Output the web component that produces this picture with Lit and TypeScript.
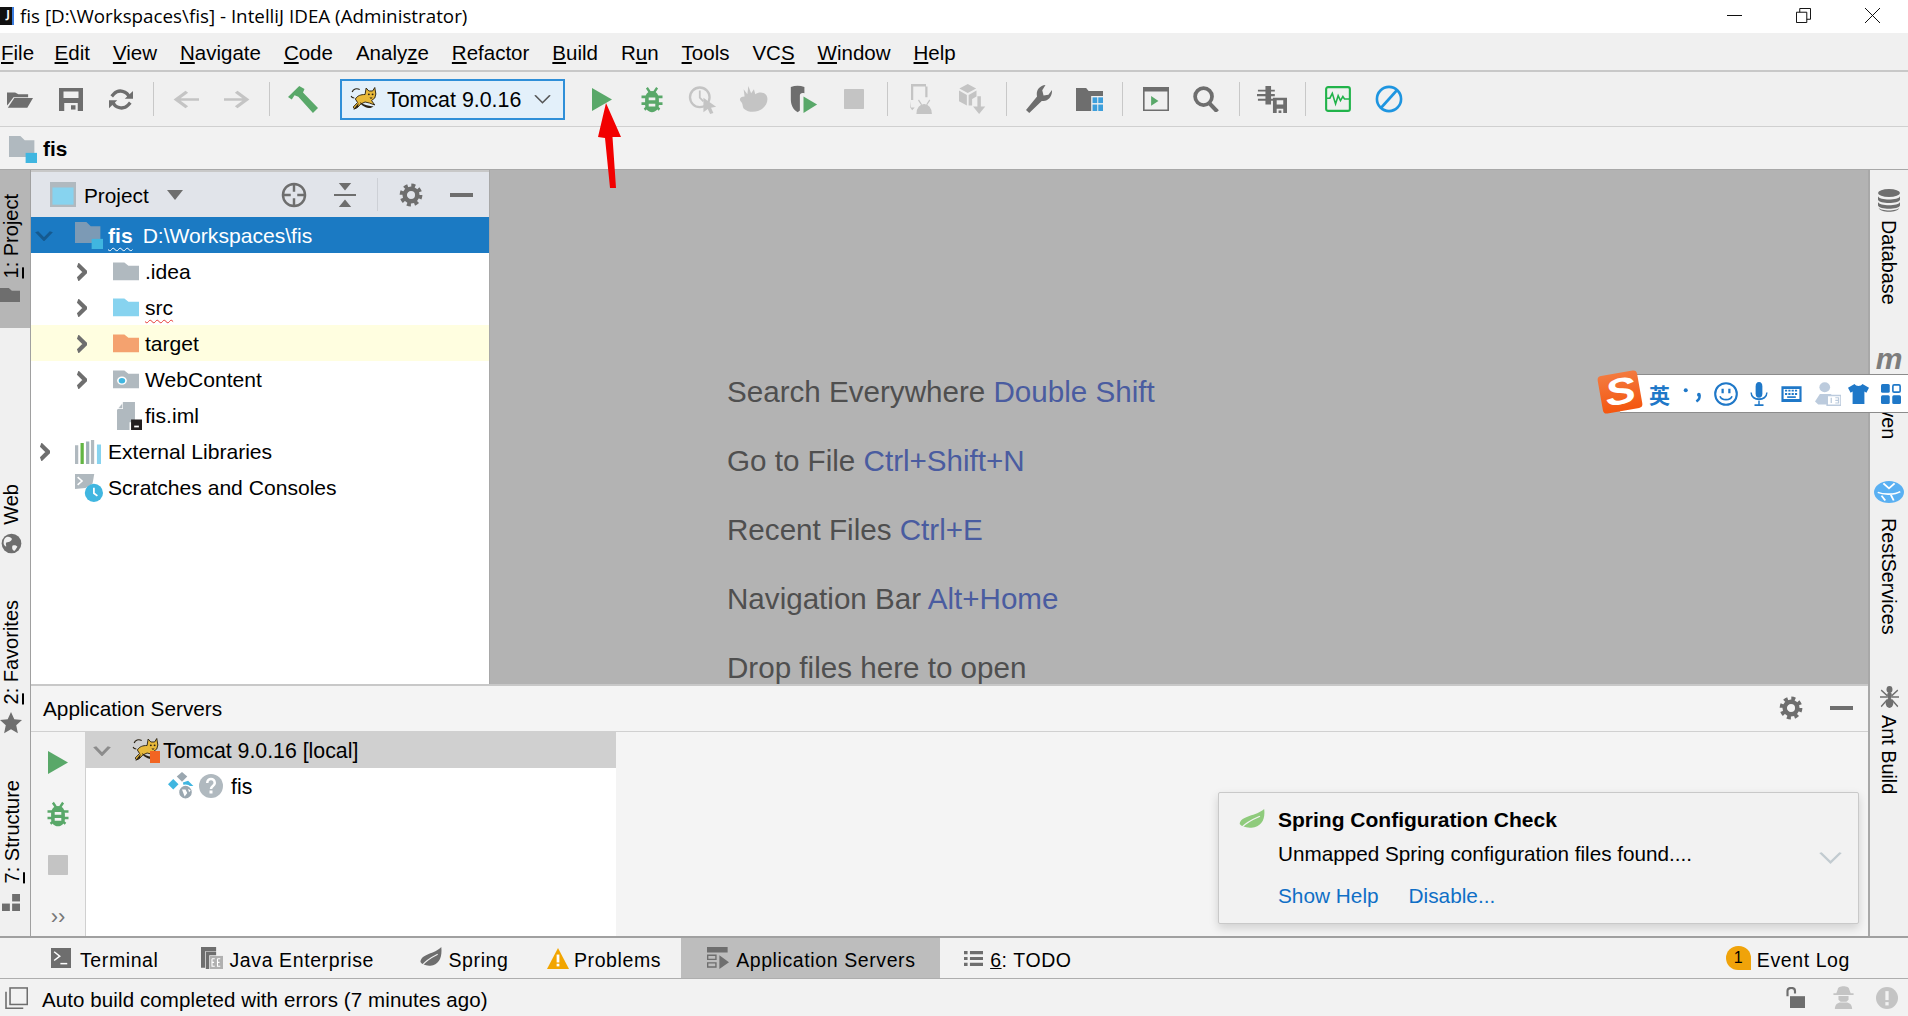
import { LitElement, html, css, svg, nothing } from "lit";
import { customElement } from "lit/decorators.js";

const G = "#6e6e6e";
const D = "#c4c4c4";
const GR = "#59a869";

const ic = (w: number, h: number, body: unknown, vb = "0 0 16 16") =>
  html`<svg class="ic" width=${w} height=${h} viewBox=${vb} preserveAspectRatio="none">${body}</svg>`;

const gearBody = (c: string) => svg`<circle cx="8" cy="8" r="4.2" fill="none" stroke=${c} stroke-width="3"/><circle cx="8" cy="8" r="6.3" fill="none" stroke=${c} stroke-width="2.6" stroke-dasharray="2.6 2.35"/>`;
const gear = (s = 25) => ic(s, s, gearBody(G));
const minus = (w = 23) => ic(w, 4, svg`<rect width="16" height="16" fill=${G}/>`);
const playIc = (w = 20, h = 23) => ic(w, h, svg`<path d="M0 0 16 8 0 16z" fill=${GR}/>`);
const bugBody = (c: string) => svg`
  <path d="M4.6 1 6.8 4M11.4 1 9.2 4M1 6.5h3M12 6.5h3M1 10.5h3M12 10.5h3M3 14l2-1.6M13 14l-2-1.6" stroke=${c} stroke-width="1.6" fill="none"/>
  <path fill-rule="evenodd" d="M8 3c3 0 4.6 2.2 4.6 5v3c0 2.5-2 4.5-4.6 4.5S3.400 13.500 3.400 11V8C3.400 5.200 5 3 8 3zM5.800 6.800v1.700h4.400V6.800zM5.800 10.500v1.700h4.400v-1.700z" fill=${c}/>`;
const bug = (w = 24, h = 27) => ic(w, h, bugBody(GR));
const stop = (w = 20, h = 20, c = D) => ic(w, h, svg`<rect width="16" height="16" rx=".6" fill=${c}/>`);

const tomcatBody = svg`
  <path d="M2 5C3 2 6 1 9 2.500" fill="none" stroke="#2a2214" stroke-width="1.100"/>
  <path d="M1 9c.5 1.500 1.500 2 3 2" fill="none" stroke="#2a2214" stroke-width="1"/>
  <path d="M5 12c2-3.500 5-4.500 9-4.500L15 1l2.500 3h3.500L23 .5 24 7l-1 4-3 2.500 3 4.500-5-2-4-1-4 2-3 3.500-2.800 1.500L3 20l4-4.500z" fill="#e8b93a" stroke="#2a2214" stroke-width=".9" stroke-linejoin="round"/>
  <path d="M9 15c4 3 9 4 13 4.500L19 21c-4 0-8-2-10-6zM5 20l3-4-.5 4-4.500 3z" fill="#2a2214"/>
  <circle cx="17.500" cy="7.300" r=".9" fill="#2a2214"/><circle cx="21" cy="7.300" r=".9" fill="#2a2214"/><path d="M18 10.500h3l-1.500 1.500z" fill="#2a2214"/>`;
const tomcat = (w = 28, h = 24) => ic(w, h, tomcatBody, "0 0 26 24");

const folderPath = "M0 1h7l2.500 2.500H16V14H0z";
const folder = (c: string, w = 26, h = 22) => ic(w, h, svg`<path d=${folderPath} fill=${c}/>`);
const moduleFolder = (c: string, w = 28, h = 27) => ic(w, h, svg`
  <path d="M0 0h6.500l2.500 2.500h5.500V12.500H0z" fill=${c}/><rect x="9.500" y="10" width="6.500" height="6" fill="#40b6e0"/>`);
const webFolder = () => ic(26, 22, svg`<path d=${folderPath} fill="#b0b9bf"/><circle cx="5.500" cy="8.500" r="3" fill="#fff"/><circle cx="5.500" cy="8.500" r="2" fill="#40b6e0"/>`);
const imlIcon = () => ic(25, 28, svg`
  <path d="M4 0H11.500V11.500H8V16H0V4.500z" fill="#b0b9bf" fill-rule="evenodd"/><path d="M3.800 .3 .3 4h3.500z" fill="#fff"/><path d="M3.400 1 1 3.500h2.400z" fill="#b0b9bf"/>
  <rect x="9" y="10" width="7" height="6" fill="#231f20"/><rect x="11" y="13.500" width="3" height="1" fill="#fff"/>`);
const libIcon = () => ic(26, 24, svg`
  <rect x="0" y="3.500" width="2" height="12.500" fill="#b0b9bf"/><rect x="3.400" y="2" width="2" height="14" fill="#62b543"/>
  <rect x="6.800" y="1" width="2" height="15" fill="#9fb0b8"/><rect x="9.800" y="0" width="2" height="16" fill="#b0b9bf"/><rect x="13.500" y="3" width="2.500" height="13" fill="#87d3ef"/>`);
const scratchIcon = () => ic(28, 28, svg`
  <path d="M0 0h11l-1 5.500-4 2.500L0 8.500z" fill="#b0b9bf"/><path d="M1.500 1.800 4 4 1.500 6.200" fill="none" stroke="#fff" stroke-width=".9"/>
  <circle cx="10.800" cy="10.800" r="5.200" fill="#40b6e0"/><path d="M10.800 7.800V11l2 1.500" stroke="#fff" stroke-width="1" fill="none"/>`);
const chev = (open: boolean, c: string, w = open ? 18 : 11, h = open ? 11 : 18) =>
  ic(w, h, open
    ? svg`<path d="M1.500 2.500 8 13.500 14.500 2.500" fill="none" stroke=${c} stroke-width="3.200"/>`
    : svg`<path d="M2.500 1.500 13.500 8 2.500 14.500" fill="none" stroke=${c} stroke-width="4.500"/>`);

const globeBody = (bg: string) => svg`<circle cx="8" cy="8" r="7.500" fill=${G}/><path d="M3 4c2-2 4-1 5 0s-1 3-3 3-1 2-1 3-2-1-2-2 0-3 1-4zM9 9.500c1.500-.5 3 0 3.500 1l-2 3c-1 .5-2-1-2-2s0-1.800.500-2z" fill=${bg}/>`;
const leafBody = (c: string, v: string) => svg`<path d="M15.500 0c.8 7-1.500 12.500-7.500 13-3.500.3-6-1-7-2.500C1.500 4.500 11 5 15.500 0z" fill=${c}/><path d="M2 13c3-4 7-6 11-8" fill="none" stroke=${v} stroke-width=".8"/>`;

const toolbarIcons: Record<string, unknown> = {
  open: ic(26, 19, svg`<path d="M0 2h5l2 1.500h6V6H4L1 11.500 0 13z" fill=${G}/><path d="M4.500 6.800H16L12.500 15H.500z" fill=${G}/>`),
  save: ic(24, 23, svg`<path fill-rule="evenodd" d="M0 0h16v16H0zM3 2.500v4.500h10V2.500zM3.500 10.500V16h9v-5.500z" fill=${G}/><rect x="8" y="12" width="3" height="3" fill=${G}/>`),
  sync: ic(24, 23, svg`
    <path d="M13.500 6.500A6 6 0 0 0 3.200 4.200L1.800 5.800M2.500 9.500A6 6 0 0 0 12.800 11.800l1.400-1.600" fill="none" stroke=${G} stroke-width="2.300"/>
    <path d="M10.500 7.500h5.500V2zM5.500 8.500H0V14z" fill=${G}/>`),
  back: ic(26, 19, svg`<path d="M16 8H2.500M8.500 1.500 2 8l6.500 6.500" fill="none" stroke=${D} stroke-width="2.300"/>`),
  fwd: ic(26, 19, svg`<path d="M0 8h13.500M7.500 1.500 14 8l-6.500 6.500" fill="none" stroke=${D} stroke-width="2.300"/>`),
  hammer: ic(30, 27, svg`<path d="M0 6.500 6 0l2.800 1.800L8 3.800 16 13l-2.700 3L5.500 6.300 3.500 5.500 2 8z" fill=${GR}/>`),
  play: playIc(),
  bug: bug(),
  clock: ic(29, 29, svg`<circle cx="6.500" cy="6.800" r="5.400" fill="none" stroke=${D} stroke-width="1.300"/><path d="M6.500 3v4l2 2" fill="none" stroke=${D} stroke-width="1"/><path d="M8.500 7 15.500 12l-2.800.6L14 15.500l-1.800.5-1.300-2.800L8.500 15z" fill=${D}/>`),
  hand: ic(30, 26, svg`<path d="M3 2l2 3 .5-5L7 4.500 8.500 2 9.200 5C11 3.500 14 3.500 15.300 6c1.200 3-.3 7.500-4.300 9.300-3 1.200-6 .5-7.500-1C2 13 3 11 1.500 9.500.300 8 1.500 6.500 3.500 6.500z" fill=${D}/>`),
  cover: ic(29, 28, svg`<path d="M1 1.200C3.500 .2 6 .2 8.500 1.200v3.500C7 4.200 6 4.800 6 6v8.500L4.800 15.500C2 14 1 11 1 8z" fill=${G}/><path d="M8 6.500v9.500l7.500-4.800z" fill=${GR}/>`),
  stop: stop(),
  device: ic(24, 30, svg`<path d="M2 0h10v1.300H3.500v7.200H2zM11.500 1.300H13V7h-1.500zM2 9v3.500h2.500L2.800 14 1.500 12.500z" fill=${D}/><path d="M6 15.800a4.500 4.500 0 0 1 9.500 0zM7 8.500l2 2.500M14.500 8.500l-2 2.500" fill=${D} stroke=${D} stroke-width=".8"/>`),
  box: ic(28, 30, svg`<path d="M5 0 9.800 2.400 5 4.800.2 2.400zM0 3.500 4.500 5.800v5.700L0 9.200zM5.500 5.800 10 3.500v3.200L7.500 8v3.500l-2 0z" fill=${D}/><path d="M10.500 6.500h2V12h2.500L11.500 16 8 12h2.500z" fill=${D}/>`),
  wrench: ic(26, 28, svg`<path d="M2 16 0 14.300 6.800 6.500C6 3.500 8 .3 12 0L10 3l.8 3 3-.500L16 2.800c.3 3.500-2.300 7-6.300 6.300z" fill=${G}/>`),
  struct: ic(27, 23, svg`<path d="M0 0h6l1.500 2H16V5.500H9V16H0z" fill=${G}/><rect x="9.800" y="6.500" width="2.800" height="4" fill="#3d9fdc"/><rect x="13.200" y="6.500" width="2.800" height="4" fill="#3d9fdc"/><rect x="9.800" y="11.500" width="2.800" height="4.500" fill="#3d9fdc"/><rect x="13.200" y="11.500" width="2.800" height="4.500" fill="#3d9fdc"/>`),
  term: ic(26, 24, svg`<rect x=".5" y=".5" width="15" height="15" fill="none" stroke=${G} stroke-width="1"/><rect x="0" y="0" width="16" height="3" fill=${G}/><path d="M5 6v6.500l4.500-3.200z" fill=${GR}/>`),
  search: ic(26, 26, svg`<circle cx="6.500" cy="6.500" r="5.200" fill="none" stroke=${G} stroke-width="2.300"/><path d="M10 10.500 15 15.800" stroke=${G} stroke-width="2.500"/>`),
  chip: ic(30, 27, svg`<path d="M4.500 0H7.500V2.200H9.500V3.200H7.500V4.800H9.500V6H7.500V7.500H9V8.700H7.500V11H4.500V8.700H.500V7.500H4.500V6H0V4.800H4.500V3.200H.500V2.200H4.500z" fill=${G}/><path fill-rule="evenodd" d="M8.500 7H16V16H8.500zM10.500 8.500V11h3.500V8.500zM10.500 13.500V16h3.500v-2.500z" fill=${G}/><rect x="11.500" y="14.500" width="1.500" height="1.500" fill=${G}/>`),
  profiler: ic(26, 26, svg`<rect x=".7" y=".7" width="14.600" height="14.600" rx="1.200" fill="none" stroke="#21b34a" stroke-width="1.300"/><path d="M1 7.500h2l1.500-3 2 6.500 1.600-5 1.400 3 1.500-2.500 1 1.500H15" fill="none" stroke="#21b34a" stroke-width="1"/>`),
  no: ic(28, 28, svg`<circle cx="8" cy="8" r="6.900" fill="none" stroke="#1e95e0" stroke-width="1.500"/><path d="M3.500 13 12.500 3" stroke="#1e95e0" stroke-width="1.500"/>`),
};

const tree = [
  { lvl: 0, open: true, label: "fis", extra: "D:\\Workspaces\\fis", sel: true, icon: () => moduleFolder("#7c9ab5") },
  { lvl: 1, label: ".idea", icon: () => folder("#b0b9bf") },
  { lvl: 1, label: "src", red: true, icon: () => folder("#87d3ef") },
  { lvl: 1, label: "target", hl: true, icon: () => folder("#f4a26f") },
  { lvl: 1, label: "WebContent", icon: webFolder },
  { lvl: 1, label: "fis.iml", noChev: true, pad: true, icon: imlIcon },
  { lvl: 0, label: "External Libraries", icon: libIcon },
  { lvl: 0, label: "Scratches and Consoles", noChev: true, icon: scratchIcon },
];

const hints = [
  ["Search Everywhere", "Double Shift"],
  ["Go to File", "Ctrl+Shift+N"],
  ["Recent Files", "Ctrl+E"],
  ["Navigation Bar", "Alt+Home"],
  ["Drop files here to open", ""],
];

const menus = [
  ["", "F", "ile"], ["", "E", "dit"], ["", "V", "iew"], ["", "N", "avigate"], ["", "C", "ode"],
  ["Analy", "z", "e"], ["", "R", "efactor"], ["", "B", "uild"], ["R", "u", "n"], ["", "T", "ools"],
  ["VC", "S", ""], ["", "W", "indow"], ["", "H", "elp"],
];

@customElement("app-root")
export class AppRoot extends LitElement {
  static styles = css`
    :host { display: block; width: 1908px; height: 1016px; font-family: "Liberation Sans", Arial, sans-serif; font-size: 20.8px; color: #000; }
    * { box-sizing: border-box; }
    .ic { display: block; flex: none; }
    .app { position: relative; width: 1908px; height: 1016px; overflow: hidden; display: flex; flex-direction: column; background: #f2f2f2; }
    .title { height: 33px; background: #fff; display: flex; align-items: center; flex: none; font-family: "Open Sans", "Liberation Sans", sans-serif; font-size: 18.8px; padding-bottom: 2px; }
    .jlogo { width: 14px; height: 18px; background: #111; color: #fff; font-size: 11px; font-weight: 700; line-height: 14px; text-align: right; padding-right: 2px; border-right: 2px solid #3b7de0; margin-right: 6px; }
    .title .spacer { flex: 1; }
    .wbtns { display: flex; align-items: center; padding-right: 28px; gap: 54px; }
    .menu { height: 39px; flex: none; background: #f0f0f0; border-bottom: 2px solid #c8c8c8; display: flex; align-items: center; gap: 23px; padding: 3px 0 0 1px; font-size: 20.500px; }
    .menu span:first-child { margin-right: -2.500px; }
    .toolbar { height: 55px; flex: none; background: #f0f0f0; border-bottom: 1px solid #d0d0d0; display: flex; align-items: center; gap: 8.500px; }
    .toolbar .first { margin-left: -1px; }
    .slot { width: 42px; height: 32px; display: flex; align-items: center; justify-content: center; flex: none; }
    .slot.h { margin-left: 1px; }
    .slot.bx { margin-left: 2.500px; }
    .sep { width: 1px; height: 34px; background: #c8c8c8; margin: 0 3px; flex: none; }
    .sep.s { margin: 0 2.500px; }
    .combo { width: 225px; height: 41px; margin: 0 7px 0 8px; flex: none; background: #e3f0fa; border: 2px solid #2f8fd8; display: flex; align-items: center; padding-left: 8px; font-size: 21.400px; }
    .combo span { margin: 2px 0 0 9px; flex: 1; }
    .combo .ic:last-child { margin-right: 12px; }
    .nav { height: 43px; flex: none; background: #f2f2f2; display: flex; align-items: center; padding: 2px 0 0 9px; font-weight: 700; gap: 6px; border-bottom: 1px solid #a8a8a8; }
    .main { height: 768px; flex: none; display: flex; border-bottom: 2px solid #a0a0a0; }
    .lstripe { width: 31px; flex: none; background: #f0f0f0; border-right: 1px solid #a0a0a0; display: flex; flex-direction: column; overflow: hidden; }
    .vtab { display: flex; flex-direction: column; align-items: flex-start; flex: none; font-size: 20px; padding-left: 1px; }
    .vtext { writing-mode: vertical-rl; transform: rotate(180deg); line-height: 20px; white-space: nowrap; }
    .tab-project { height: 158px; background: #b6b6b6; padding-top: 24px; gap: 9px; padding-left: 0; }
    .tab-project .vtext, .tab-fav .vtext { margin-left: 1px; }
    .tab-web { margin-top: 156px; gap: 8px; }
    .tab-fav { margin-top: 46px; gap: 8px; padding-left: 0; }
    .tab-str { margin-top: 46px; gap: 10px; padding-left: 2px; }
    .center { flex: 1; min-width: 0; display: flex; flex-direction: column; }
    .upper { height: 514px; flex: none; display: flex; }
    .project { width: 458px; flex: none; background: #fff; display: flex; flex-direction: column; }
    .phead { height: 47px; flex: none; background: #e1e4ea; border-top: 2px solid #c8c8c8; display: flex; align-items: center; padding-left: 19px; }
    .phead .name { margin: 2px 0 0 8px; }
    .phead .tri { margin-left: 18px; margin-right: 98px; }
    .phead .collapse { margin-left: 27px; }
    .phead .psep { width: 1px; height: 33px; background: #cdd0d6; margin: 0 21px; }
    .phead .mn { margin-left: 27.500px; }
    .row { height: 36px; flex: none; display: flex; align-items: center; white-space: pre; font-size: 21.100px; padding-top: 2px; }
    .row.sel { background: #1b7ac3; color: #fff; padding-top: 1px; }
    .row.hl { background: #fffee0; }
    .cslot { width: 26px; display: flex; justify-content: center; flex: none; margin-right: 18px; }
    .cslot.l1 { margin: 0 19px 0 -1px; }
    .islot { width: 33px; flex: none; display: flex; align-items: center; }
    .islot.l1 { width: 32px; }
    .islot.pad { padding-left: 4px; }
    .row .b { font-weight: 700; text-decoration: underline wavy #fff 1px; text-underline-offset: 4px; }
    .row .x { margin-left: 10px; }
    .row .r { text-decoration: underline wavy #e53935 1px; text-underline-offset: 4px; }
    .editor { flex: 1; background: #b3b3b3; padding: 187px 0 0 237px; font-size: 29.600px; line-height: 69px; color: #4f4f4f; overflow: hidden; white-space: nowrap; border-left: 1px solid #a8a8a8; }
    .editor b { font-weight: 400; color: #4a5ca0; }
    .split { height: 2px; flex: none; background: #c8c8c8; }
    .lower { flex: 1; min-height: 0; display: flex; flex-direction: column; position: relative; background: #f4f4f4; }
    .lhead { height: 46px; flex: none; border-bottom: 1px solid #d0d0d0; display: flex; align-items: center; padding: 0 15px 2px 12px; }
    .lhead span { flex: 1; margin-top: 2px; }
    .lhead .gw { margin-right: -1px; }
    .lhead .mn { margin-left: 28px; }
    .lbody { flex: 1; min-height: 0; display: flex; }
    .ltools { width: 55px; flex: none; border-right: 1px solid #d0d0d0; display: flex; flex-direction: column; align-items: center; padding-top: 19px; }
    .ltools .b1 { margin-top: 27px; }
    .ltools .b2 { margin-top: 28px; }
    .ltools .more { margin-top: 30px; color: #777; font-size: 22px; line-height: 24px; }
    .ltree { width: 530px; flex: none; background: #fff; }
    .srow { height: 36px; display: flex; align-items: center; font-size: 21.300px; }
    .srow span { margin-top: 2px; }
    .srow.s1 { background: #d0d0d0; padding-left: 7px; }
    .srow.s1 .tc { margin-left: 21px; position: relative; }
    .srow.s1 .badge { position: absolute; right: 0; bottom: -1px; width: 10px; height: 12px; background: #f26522; }
    .srow.s1 span { margin-left: 3px; }
    .srow.s2 { padding-left: 82px; }
    .srow.s2 .q { margin-left: 3px; }
    .srow.s2 span { margin-left: 8px; }
    .notify { position: absolute; left: 1187px; top: 106px; width: 641px; height: 132px; background: #f2f2f2; border: 1px solid #c9c9c9; border-radius: 2px; box-shadow: 0 4px 10px rgba(0,0,0,.15); padding: 14px 0 0 59px; }
    .notify .leaf { position: absolute; left: 19px; top: 16px; }
    .notify .ttl { font-weight: 700; line-height: 26px; font-size: 21px; }
    .notify .msg { line-height: 26px; margin-top: 8px; font-size: 20.700px; }
    .notify .links { line-height: 26px; margin-top: 16px; color: #0f6fc6; display: flex; gap: 30px; }
    .notify .dn { position: absolute; right: 16px; top: 58px; }
    .rstripe { width: 40px; flex: none; background: #f0f0f0; border-left: 2px solid #a8a8a8; display: flex; flex-direction: column; align-items: center; overflow: hidden; font-size: 19.800px; }
    .rtab { display: flex; flex-direction: column; align-items: center; flex: none; }
    .rtext { writing-mode: vertical-rl; line-height: 20px; white-space: nowrap; }
    .rt-db { margin-top: 19px; gap: 8px; }
    .rt-mv { margin-top: 44px; gap: 11px; }
    .rt-mv .m { font-size: 30px; font-weight: 700; font-style: italic; color: #7d7d7d; line-height: 20px; height: 20px; }
    .rt-rs { margin-top: 42px; gap: 11px; }
    .rt-ant { margin-top: 51px; gap: 7px; }
    .tools { height: 41px; flex: none; display: flex; align-items: stretch; background: #f2f2f2; border-bottom: 1px solid #aeaeae; letter-spacing: .6px; font-size: 19.500px; }
    .tw { display: flex; align-items: center; gap: 8px; flex: none; }
    .tw span { margin-top: 5px; }
    .tw.t1 { margin-left: 51px; gap: 9px; }
    .tw.t2 { margin-left: 42px; gap: 7px; }
    .tw.t3 { margin-left: 45px; gap: 6.500px; }
    .tw.t4 { margin-left: 38.500px; gap: 5px; }
    .tw.act { margin-left: 20px; width: 259px; background: #bdbdbd; padding-left: 26px; gap: 7px; }
    .tw.t6 { margin-left: 24px; gap: 7px; }
    .tw.ev { margin-left: auto; margin-right: 58px; gap: 6px; }
    .evb { width: 25px; height: 24px; background: #f0a30a; border-radius: 12px 12px 0 12px; display: flex; align-items: center; justify-content: center; font-size: 16px; letter-spacing: 0; }
    .status { height: 37px; flex: none; display: flex; align-items: center; padding: 0 10px 0 5px; background: #f2f2f2; letter-spacing: .1px; font-size: 20.500px; }
    .status .txt { margin: 5px 0 0 14px; flex: 1; }
    .status .i2 { margin-left: 27px; }
    .status .i3 { margin-left: 21px; }
    .arrow { position: absolute; left: 590px; top: 100px; }
    .ime { position: absolute; left: 1620px; top: 374px; width: 288px; height: 39px; background: #fff; border-top: 1px solid #8c8c8c; border-bottom: 1px solid #8c8c8c; display: flex; align-items: center; padding-left: 29px; color: #1f78c8; }
    .ime .han { font-family: "Noto Sans CJK SC", sans-serif; font-size: 21px; font-weight: 700; }
    .ime .ii { margin-left: 12px; }
    .ime .sh { margin-left: 7px; }
    .ime .gr { margin-left: 12px; }
    .sogou { position: absolute; left: 1600px; top: 373px; width: 40px; height: 38px; background: linear-gradient(#f37a3f, #f4560f); border-radius: 4px; transform: rotate(-10deg); color: #fff; font-weight: 900; font-style: italic; font-size: 37px; line-height: 38px; text-align: center; }
    .sogou span { display: inline-block; transform: scaleX(1.250); }
  `;

  private renderRow(r: any) {
    const ind = r.lvl ? 38 : 0;
    const cls = "row" + (r.sel ? " sel" : "") + (r.hl ? " hl" : "");
    const lv = r.lvl ? "l1" : "";
    return html`<div class=${cls} style="padding-left:${ind}px">
      <div class="cslot ${lv}">${r.noChev ? nothing : r.open ? chev(true, "#155a90") : chev(false, G)}</div>
      <div class="islot ${lv} ${r.pad ? "pad" : ""}">${r.icon()}</div>
      <span class=${r.sel ? "b" : r.red ? "r" : ""}>${r.label}</span>
      ${r.extra ? html`<span class="x">${r.extra}</span>` : nothing}
    </div>`;
  }

  render() {
    const I = toolbarIcons;
    const slot = (k: string, c = "") => html`<div class="slot ${c}">${I[k]}</div>`;
    const sep = html`<div class="sep"></div>`;
    const seps = html`<div class="sep s"></div>`;
    return html`<div class="app">
      <div class="title">
        <div class="jlogo">J</div>
        <span>fis [D:\\Workspaces\\fis] - IntelliJ IDEA (Administrator)</span>
        <div class="spacer"></div>
        <div class="wbtns">
          ${ic(15, 15, svg`<path d="M0 8h16" stroke="#000" stroke-width="1"/>`)}
          ${ic(15, 15, svg`<path d="M.5 4.500h11v11H.5zM4 4.500V.5h11.500V12H11.500" fill="none" stroke="#000" stroke-width="1"/>`)}
          ${ic(15, 15, svg`<path d="M0 0 16 16M16 0 0 16" stroke="#000" stroke-width="1"/>`)}
        </div>
      </div>
      <div class="menu">${menus.map(([a, u, b]) => html`<span>${a}<u>${u}</u>${b}</span>`)}</div>
      <div class="toolbar">
        ${slot("open", "first")}${slot("save")}${slot("sync")}${seps}${slot("back")}${slot("fwd")}${seps}${slot("hammer", "h")}
        <div class="combo">${tomcat()}<span>Tomcat 9.0.16</span>${ic(17, 10, svg`<path d="M1 2 8 14 15 2" fill="none" stroke="#555" stroke-width="1.800"/>`)}</div>
        ${slot("play")}${slot("bug")}${slot("clock")}${slot("hand")}${slot("cover")}${slot("stop")}${sep}
        ${slot("device")}${slot("box", "bx")}${sep}${slot("wrench")}${slot("struct")}${sep}${slot("term")}${slot("search")}${sep}${slot("chip")}${sep}${slot("profiler")}${slot("no")}
      </div>
      <div class="nav">${moduleFolder("#b0b9bf")}<span>fis</span></div>
      <div class="main">
        <div class="lstripe">
          <div class="vtab tab-project"><span class="vtext"><u>1</u>: Project</span>${ic(20, 17, svg`<path d=${folderPath} fill=${G}/>`)}</div>
          <div class="vtab tab-web"><span class="vtext">Web</span>${ic(21, 21, globeBody("#f0f0f0"))}</div>
          <div class="vtab tab-fav"><span class="vtext"><u>2</u>: Favorites</span>${ic(22, 22, svg`<path d="M8 0l2.400 5.300 5.600.6-4.200 3.800L13 15.500 8 12.600 3 15.500l1.200-5.800L0 5.900l5.600-.6z" fill=${G}/>`)}</div>
          <div class="vtab tab-str"><span class="vtext"><u>7</u>: Structure</span>${ic(18, 17, svg`<rect x="9" y="0" width="7" height="7" fill=${G}/><rect x="0" y="9" width="7" height="7" fill=${G}/><rect x="9" y="9" width="7" height="7" fill=${G}/>`)}</div>
        </div>
        <div class="center">
          <div class="upper">
            <div class="project">
              <div class="phead">
                ${ic(26, 25, svg`<rect width="16" height="16" fill="#b0b9bf"/><rect x="1.500" y="3.500" width="13" height="11" fill="#87d3ef"/>`)}
                <span class="name">Project</span>
                <span class="tri">${ic(16, 10, svg`<path d="M0 0h16L8 16z" fill=${G}/>`)}</span>
                ${ic(26, 26, svg`<circle cx="8" cy="8" r="6.800" fill="none" stroke=${G} stroke-width="1.500"/><path d="M8 1v5M8 10v5M1 8h5M10 8h5" stroke=${G} stroke-width="1.500"/>`)}
                <span class="collapse">${ic(22, 24, svg`<path d="M3.500 0h9L8 5zM3.500 16h9L8 11zM0 7.300h16v1.400H0z" fill=${G}/>`)}</span>
                <span class="psep"></span>
                ${gear(24)}
                <span class="mn">${minus()}</span>
              </div>
              ${tree.map((r) => this.renderRow(r))}
            </div>
            <div class="editor">
              ${hints.map(([a, b]) => html`<div>${a}${b ? html` <b>${b}</b>` : nothing}</div>`)}
            </div>
          </div>
          <div class="split"></div>
          <div class="lower">
            <div class="lhead"><span>Application Servers</span><div class="gw">${gear(24)}</div><div class="mn">${minus()}</div></div>
            <div class="lbody">
              <div class="ltools">
                ${playIc()}
                <div class="b1">${bug(24, 26)}</div>
                <div class="b2">${stop()}</div>
                <div class="more">››</div>
              </div>
              <div class="ltree">
                <div class="srow s1">
                  ${chev(true, "#8c8c8c")}
                  <div class="tc">${tomcat()}<div class="badge"></div></div>
                  <span>Tomcat 9.0.16 [local]</span>
                </div>
                <div class="srow s2">
                  ${ic(28, 28, svg`<path d="M5 2.500 8 0l3 2.500L8 5.500z" fill="#9aa7b0"/><path d="M0 7l3-3 3 3-3 3z" fill="#40b6e0"/><path d="M8.500 6l3-1 3 3H9z" fill="#40b6e0"/><circle cx="10" cy="11.500" r="4" fill="#9aa7b0" stroke="#fff" stroke-width=".8"/><path d="M8 10h2l1 2-1.500 2zM11.500 9.500l1.500 1-1 1z" fill="#fff"/>`)}
                  <div class="q">${ic(24, 24, svg`<circle cx="8" cy="8" r="8" fill="#b0b9bf"/><path d="M5.500 6c0-3.500 5-3.500 5 0 0 2-2.500 2-2.500 4" fill="none" stroke="#fff" stroke-width="1.700"/><rect x="7" y="11" width="2" height="2" fill="#fff"/>`)}</div>
                  <span>fis</span>
                </div>
              </div>
            </div>
            <div class="notify">
              <div class="leaf">${ic(27, 23, leafBody("#8fcb7c", "#f2f2f2"))}</div>
              <div class="ttl">Spring Configuration Check</div>
              <div class="msg">Unmapped Spring configuration files found....</div>
              <div class="links"><span>Show Help</span><span>Disable...</span></div>
              <div class="dn">${ic(23, 13, svg`<path d="M1 2 8 14 15 2" fill="none" stroke="#c2cbd0" stroke-width="2"/>`)}</div>
            </div>
          </div>
        </div>
        <div class="rstripe">
          <div class="rtab rt-db">
            ${ic(22, 23, svg`<ellipse cx="8" cy="2.800" rx="8" ry="2.800" fill=${G}/><path d="M0 5c1 3 15 3 16 0v2.500c-1 3-15 3-16 0zM0 9c1 3 15 3 16 0v2.500c-1 3-15 3-16 0zM.5 13c2 2.500 13 2.500 15 0-1 3.800-14 3.800-15 0z" fill=${G}/>`)}
            <span class="rtext">Database</span>
          </div>
          <div class="rtab rt-mv"><span class="m">m</span><span class="rtext">Maven</span></div>
          <div class="rtab rt-rs">
            ${ic(30, 26, svg`<path d="M8 0c4.500 0 8 3.300 8 6.800 0 4-3.600 6.800-8 6.800S0 10.800 0 6.800C0 3.300 3.500 0 8 0z" fill="#5ab0f2"/><path d="M5 1.500l3 3 3-3M4 9l2 3M9 8.500l1.500 3.500M2 7c3 1.500 9 1.500 12-.5" fill="none" stroke="#fff" stroke-width="1"/>`)}
            <span class="rtext">RestServices</span>
          </div>
          <div class="rtab rt-ant">
            ${ic(19, 22, svg`<circle cx="8" cy="2.500" r="2.500" fill=${G}/><ellipse cx="8" cy="7" rx="2" ry="2.500" fill=${G}/><ellipse cx="8" cy="12.500" rx="3.200" ry="3.500" fill=${G}/><path d="M6 7 1 3M10 7l5-4M6 8H0M10 8h6M6 10 1 15M10 10l5 5" stroke=${G} stroke-width="1.100" fill="none"/>`)}
            <span class="rtext">Ant Build</span>
          </div>
        </div>
      </div>
      <div class="tools">
        <div class="tw t1">${ic(20, 20, svg`<rect width="16" height="16" fill=${G}/><path d="M2.500 3 7 6.500 2.500 10" fill="none" stroke="#fff" stroke-width="1.200"/><path d="M7.500 12.500H13" stroke="#fff" stroke-width="1.200"/>`)}<span>Terminal</span></div>
        <div class="tw t2">${ic(22, 22, svg`<path d="M0 0h11v3H3v12H0zM3.500 3.500H11V6H6v10H3.500z" fill=${G}/><rect x="6.500" y="6.500" width="9.500" height="9.500" fill="#b0b0b0"/><path d="M8 8.500v5.500h2M8 11.200h1.500M8 8.500h2M12 8.500v5.500h2M12 11.200h1.500M12 8.500h2" fill="none" stroke="#fff" stroke-width=".8"/>`)}<span>Java Enterprise</span></div>
        <div class="tw t3">${ic(23, 23, leafBody(G, "#f2f2f2"))}<span>Spring</span></div>
        <div class="tw t4">${ic(22, 21, svg`<path d="M8 0 16 16H0z" fill="#f2a500"/><rect x="7" y="5" width="2" height="6" fill="#fff"/><rect x="7" y="12" width="2" height="2" fill="#fff"/>`)}<span>Problems</span></div>
        <div class="tw act">${ic(22, 22, svg`<path fill-rule="evenodd" d="M0 0h15v4H0zM0 5.500h7v4H0zM1 6.500v2h5v-2zM0 11h7v4H0zM1 12v2h5v-2z" fill=${G}/><path d="M9 6v10l7-5z" fill=${G}/>`)}<span>Application Servers</span></div>
        <div class="tw t6">${ic(19, 17, svg`<path d="M0 1h3v3H0zM5 1h11v3H5zM0 6.500h3v3H0zM5 6.500h11v3H5zM0 12h3v3H0zM5 12h11v3H5z" fill=${G}/>`)}<span><u>6</u>: TODO</span></div>
        <div class="tw ev"><div class="evb">1</div><span>Event Log</span></div>
      </div>
      <div class="status">
        ${ic(23, 22, svg`<rect x="3.500" y=".7" width="12" height="12" fill="none" stroke=${G} stroke-width="1.100"/><path d="M.7 3.500v12h12" fill="none" stroke=${G} stroke-width="1.100"/>`)}
        <span class="txt">Auto build completed with errors (7 minutes ago)</span>
        ${ic(20, 21, svg`<rect x="4" y="7" width="12" height="9" fill=${G}/><path d="M2 7V3c0-3 6-3 6 0v2" fill="none" stroke=${G} stroke-width="1.700"/>`)}
        <div class="i2">${ic(23, 23, svg`<path d="M4 2.500c0-3 8-3 8 0L13 5H3zM1 5h14v1.300H1zM4.500 7h7v2.500L10 11H6L4.500 9.500zM2 16c0-3 2-4.500 4-4.500h4c2 0 4 1.500 4 4.500z" fill=${D}/>`)}</div>
        <div class="i3">${ic(22, 22, svg`<circle cx="8" cy="8" r="8" fill=${D}/><rect x="6.800" y="3" width="2.400" height="6.500" fill="#f2f2f2"/><rect x="6.800" y="11" width="2.400" height="2.400" fill="#f2f2f2"/>`)}</div>
      </div>

      <svg class="arrow" width="36" height="92" viewBox="0 0 36 92"><path d="M16 3 31 37H22.500L26 88h-6L15 38 8 37z" fill="#f20000"/></svg>

      <div class="ime">
        <span class="han">英</span>
        <span class="ii">${ic(20, 20, svg`<circle cx="3" cy="5" r="1.600" fill="#1f78c8"/><path d="M14 9c.5 2.500-1 4-2.500 5" fill="none" stroke="#1f78c8" stroke-width="2"/><circle cx="13.500" cy="8.500" r="1.500" fill="#1f78c8"/>`)}</span>
        <span class="ii">${ic(24, 24, svg`<circle cx="8" cy="8" r="7.200" fill="none" stroke="#1f78c8" stroke-width="1.400"/><rect x="5" y="4.500" width="1.500" height="3" fill="#1f78c8"/><rect x="9.500" y="4.500" width="1.500" height="3" fill="#1f78c8"/><path d="M4 9.500c1 3 7 3 8 0" fill="none" stroke="#1f78c8" stroke-width="1.100"/>`)}</span>
        <span class="ii">${ic(18, 24, svg`<rect x="5" y="0" width="6" height="10.500" rx="3" fill="#1f78c8"/><path d="M1 7c0 6 14 6 14 0M8 12.500V15M4 15.500h8" fill="none" stroke="#1f78c8" stroke-width="1.300"/>`)}</span>
        <span class="ii">${ic(23, 18, svg`<path fill-rule="evenodd" d="M1 1h14v14H1zM2.500 3.500v9h11v-9z" fill="#1f78c8"/><path d="M3.500 5h9M3.500 8h9" stroke="#1f78c8" stroke-width="1.700" stroke-dasharray="1.500 .8"/><rect x="5" y="10" width="6" height="1.500" fill="#1f78c8"/>`)}</span>
        <span class="ii">${ic(26, 24, svg`<circle cx="6" cy="3.500" r="3.300" fill="#bccbdd"/><path d="M0 13l3-5h7v7H2z" fill="#bccbdd"/><rect x="7.500" y="9" width="8.500" height="6.500" fill="#fff" stroke="#bccbdd"/><path d="M10 10.500v3.500M12.500 10.500h2v3.500h-2M12.500 12.200h2" fill="none" stroke="#bccbdd" stroke-width=".8"/>`)}</span>
        <span class="sh">${ic(21, 20, svg`<path d="M5 0 0 3l2 4 1.500-1V16h9V6L14 7l2-4-5-3c-1 2-5 2-6 0z" fill="#1f78c8"/>`)}</span>
        <span class="gr">${ic(20, 20, svg`<rect width="7" height="7" rx="1.200" fill="#1f78c8"/><rect x="9.500" y=".7" width="5.800" height="5.800" rx="1" fill="none" stroke="#1f78c8" stroke-width="1.300"/><rect y="9" width="7" height="7" rx="1.200" fill="#1f78c8"/><rect x="9" y="9" width="7" height="7" rx="1.200" fill="#1f78c8"/>`)}</span>
      </div>
      <div class="sogou"><span>S</span></div>
    </div>`;
  }
}
